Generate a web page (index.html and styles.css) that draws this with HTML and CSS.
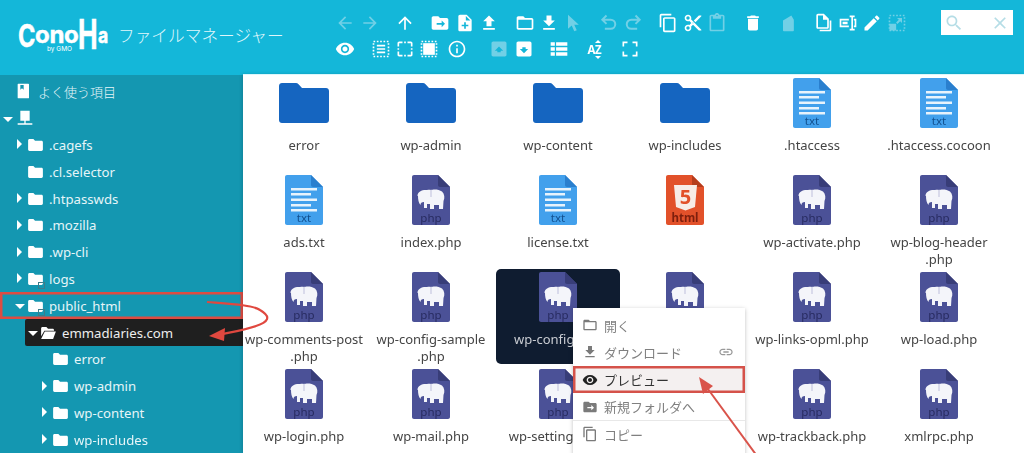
FILE: index.html
```html
<!DOCTYPE html>
<html lang="ja">

<head>
    <meta charset="UTF-8" />
    <meta name="viewport" content="width=device-width, initial-scale=1.0" />
    <title>ConoHa ファイルマネージャー</title>
    <link rel="stylesheet" href="styles.css">
</head>

<body>
    <!-- shared icons -->
    <svg class="defs" xmlns="http://www.w3.org/2000/svg">
        <symbol id="i-back" viewBox="0 0 24 24"><path d="M20 11H7.83l5.59-5.59L12 4l-8 8 8 8 1.41-1.41L7.83 13H20v-2z" /></symbol>
        <symbol id="i-forward" viewBox="0 0 24 24"><path d="M12 4l-1.41 1.41L16.17 11H4v2h12.17l-5.58 5.59L12 20l8-8z" /></symbol>
        <symbol id="i-up" viewBox="0 0 24 24"><path d="M4 12l1.41 1.41L11 7.83V20h2V7.83l5.58 5.59L20 12l-8-8-8 8z" /></symbol>
        <symbol id="i-folder-new" viewBox="0 0 24 24"><path d="M10 4H4c-1.1 0-2 .9-2 2v12c0 1.1.9 2 2 2h16c1.1 0 2-.9 2-2V8c0-1.1-.9-2-2-2h-8l-2-2zm4 5l4 4-4 4v-3H8v-2h6V9z" fill-rule="evenodd" /></symbol>
        <symbol id="i-file-add" viewBox="0 0 24 24"><path d="M14 2H6c-1.1 0-1.99.9-1.99 2L4 20c0 1.1.89 2 1.99 2H18c1.1 0 2-.9 2-2V8l-6-6zm2 14h-3v3h-2v-3H8v-2h3v-3h2v3h3v2zm-3-7V3.5L18.5 9H13z" /></symbol>
        <symbol id="i-upload" viewBox="0 0 24 24"><path d="M9 16h6v-6h4l-7-7-7 7h4zm-4 2h14v2H5z" /></symbol>
        <symbol id="i-folder-line" viewBox="0 0 24 24"><path d="M20 6h-8l-2-2H4c-1.1 0-1.99.9-1.99 2L2 18c0 1.1.9 2 2 2h16c1.1 0 2-.9 2-2V8c0-1.1-.9-2-2-2zm0 12H4V8h16v10z" /></symbol>
        <symbol id="i-download" viewBox="0 0 24 24"><path d="M19 9h-4V3H9v6H5l7 7 7-7zM5 18v2h14v-2H5z" /></symbol>
        <symbol id="i-cursor" viewBox="0 0 24 24"><path d="M6 2v17l4.5-4 3 7 3-1.3-3-6.7H19z" /></symbol>
        <symbol id="i-undo" viewBox="0 0 24 24"><path d="M9 3L4 8l5 5M4 8h10a5.5 5.5 0 0 1 0 11H7" fill="none" stroke="currentColor" stroke-width="2.4" /></symbol>
        <symbol id="i-redo" viewBox="0 0 24 24"><path d="M15 3l5 5-5 5M20 8H10a5.5 5.5 0 0 0 0 11h7" fill="none" stroke="currentColor" stroke-width="2.4" /></symbol>
        <symbol id="i-copy" viewBox="0 0 24 24"><path d="M16 1H4c-1.1 0-2 .9-2 2v14h2V3h12V1zm3 4H8c-1.1 0-2 .9-2 2v14c0 1.1.9 2 2 2h11c1.1 0 2-.9 2-2V7c0-1.1-.9-2-2-2zm0 16H8V7h11v14z" /></symbol>
        <symbol id="i-cut" viewBox="0 0 24 24"><path d="M9.64 7.64c.23-.5.36-1.05.36-1.64 0-2.21-1.79-4-4-4S2 3.79 2 6s1.79 4 4 4c.59 0 1.14-.13 1.64-.36L10 12l-2.36 2.36C7.14 14.13 6.59 14 6 14c-2.21 0-4 1.79-4 4s1.79 4 4 4 4-1.79 4-4c0-.59-.13-1.14-.36-1.64L12 14l7 7h3v-1L9.64 7.64zM6 8c-1.1 0-2-.89-2-2s.9-2 2-2 2 .89 2 2-.9 2-2 2zm0 12c-1.1 0-2-.89-2-2s.9-2 2-2 2 .89 2 2-.9 2-2 2zm6-7.5c-.28 0-.5-.22-.5-.5s.22-.5.5-.5.5.22.5.5-.22.5-.5.5zM19 3l-6 6 2 2 7-7V3z" /></symbol>
        <symbol id="i-paste" viewBox="0 0 24 24"><path d="M19 2h-4.18C14.4.84 13.3 0 12 0c-1.3 0-2.4.84-2.82 2H5c-1.1 0-2 .9-2 2v16c0 1.1.9 2 2 2h14c1.1 0 2-.9 2-2V4c0-1.1-.9-2-2-2zm-7 0c.55 0 1 .45 1 1s-.45 1-1 1-1-.45-1-1 .45-1 1-1zm7 18H5V4h2v3h10V4h2v16z" /></symbol>
        <symbol id="i-trash" viewBox="0 0 24 24"><path d="M6 19c0 1.1.9 2 2 2h8c1.1 0 2-.9 2-2V7H6v12zM19 4h-3.5l-1-1h-5l-1 1H5v2h14V4z" /></symbol>
        <symbol id="i-empty" viewBox="0 0 24 24"><path d="M6 9l10-6 3 5v13c0 .6-.4 1-1 1H7c-.6 0-1-.4-1-1z" /></symbol>
        <symbol id="i-duplicate" viewBox="0 0 24 24"><path d="M13 1H6c-1.1 0-2 .9-2 2v14c0 1.1.9 2 2 2h11c1.1 0 2-.9 2-2V7l-6-6zm4 16H6V3h6v5h5v9zM20 9v11H8v2h12c1.1 0 2-.9 2-2V9h-2z" /></symbol>
        <symbol id="i-rename" viewBox="0 0 24 24"><path d="M2 7h11v2H4v6h9v2H2zM5.500 10.500h6v3h-6zM14 3h6v2h-2v14h2v2h-6v-2h2V5h-2zM19 7h3v10h-3v-2h1V9h-1z" /></symbol>
        <symbol id="i-edit" viewBox="0 0 24 24"><path d="M3 17.25V21h3.75L17.81 9.94l-3.75-3.75L3 17.25zM20.71 7.04c.39-.39.39-1.02 0-1.41l-2.34-2.34c-.39-.39-1.02-.39-1.41 0l-1.83 1.83 3.750 3.75 1.83-1.83z" /></symbol>
        <symbol id="i-resize" viewBox="0 0 24 24"><rect x="3" y="3" width="18" height="18" fill="none" stroke="currentColor" stroke-width="2" stroke-dasharray="2 2" /><path d="M3 13h8v8H3zM12 6h6v6l-2.200-2.200-3.300 3.300-1.600-1.600 3.300-3.300z" /></symbol>
        <symbol id="i-eye" viewBox="0 0 24 24"><path d="M12 4.500C7 4.500 2.730 7.610 1 12c1.730 4.390 6 7.500 11 7.500s9.270-3.110 11-7.500c-1.730-4.390-6-7.500-11-7.500zM12 17c-2.760 0-5-2.240-5-5s2.240-5 5-5 5 2.240 5 5-2.240 5-5 5zm0-8c-1.660 0-3 1.340-3 3s1.340 3 3 3 3-1.340 3-3-1.340-3-3-3z" /></symbol>
        <symbol id="i-select-all" viewBox="0 0 24 24"><rect x="3" y="3" width="18" height="18" fill="none" stroke="currentColor" stroke-width="2" stroke-dasharray="2 2" /><path d="M7 7h10v2H7zM7 11h10v2H7zM7 15h10v2H7z" /></symbol>
        <symbol id="i-select-none" viewBox="0 0 24 24"><path d="M3 9V5c0-1.100.9-2 2-2h4v2H5v4zM15 3h4c1.100 0 2 .9 2 2v4h-2V5h-4zM3 15h2v4h4v2H5c-1.100 0-2-.9-2-2zM19 15h2v4c0 1.100-.9 2-2 2h-4v-2h4zM11 3h2v2h-2zM11 19h2v2h-2zM3 11h2v2H3zM19 11h2v2h-2z" /></symbol>
        <symbol id="i-select-inv" viewBox="0 0 24 24"><path d="M5 5h14v14H5z" /><rect x="3" y="3" width="18" height="18" fill="none" stroke="currentColor" stroke-width="2" stroke-dasharray="2 2" /></symbol>
        <symbol id="i-info" viewBox="0 0 24 24"><path d="M11 7h2v2h-2zm0 4h2v6h-2zm1-9C6.480 2 2 6.480 2 12s4.480 10 10 10 10-4.480 10-10S17.520 2 12 2zm0 18c-4.410 0-8-3.590-8-8s3.590-8 8-8 8 3.590 8 8-3.590 8-8 8z" /></symbol>
        <symbol id="i-box-up" viewBox="0 0 24 24"><path d="M5 3h14c1.100 0 2 .9 2 2v14c0 1.100-.9 2-2 2H5c-1.100 0-2-.9-2-2V5c0-1.100.9-2 2-2zm7 6l-5 5h3v2h4v-2h3z" fill-rule="evenodd" /></symbol>
        <symbol id="i-box-down" viewBox="0 0 24 24"><path d="M5 3h14c1.100 0 2 .9 2 2v14c0 1.100-.9 2-2 2H5c-1.100 0-2-.9-2-2V5c0-1.100.9-2 2-2zm7 14l5-5h-3v-2h-4v2H7z" fill-rule="evenodd" /></symbol>
        <symbol id="i-list" viewBox="0 0 24 24"><path d="M2 4h5v4H2zM8.500 4H22v4H8.500zM2 10h5v4H2zM8.500 10H22v4H8.500zM2 16h5v4H2zM8.500 16H22v4H8.500z" /></symbol>
        <symbol id="i-full" viewBox="0 0 24 24"><path d="M3 9V3h6v2H5v4zM15 3h6v6h-2V5h-4zM3 15h2v4h4v2H3zM19 15h2v6h-6v-2h4z" /></symbol>
        <symbol id="i-search" viewBox="0 0 24 24"><path d="M15.500 14h-.79l-.28-.27C15.410 12.590 16 11.110 16 9.500 16 5.910 13.090 3 9.500 3S3 5.910 3 9.500 5.910 16 9.500 16c1.610 0 3.090-.59 4.230-1.570l.27.28v.79l5 4.990L20.490 19l-4.990-5zm-6 0C7.010 14 5 11.990 5 9.500S7.010 5 9.500 5 14 7.010 14 9.500 11.990 14 9.500 14z" /></symbol>
        <symbol id="i-close" viewBox="0 0 24 24"><path d="M19 6.410L17.590 5 12 10.590 6.410 5 5 6.410 10.590 12 5 17.590 6.410 19 12 13.410 17.590 19 19 17.590 13.410 12z" /></symbol>
        <symbol id="i-link" viewBox="0 0 24 24"><path d="M3.900 12c0-1.710 1.390-3.100 3.100-3.100h4V7H7c-2.760 0-5 2.240-5 5s2.240 5 5 5h4v-1.900H7c-1.710 0-3.100-1.390-3.100-3.100zM8 13h8v-2H8v2zm9-6h-4v1.900h4c1.710 0 3.100 1.390 3.100 3.100s-1.390 3.100-3.100 3.100h-4V17h4c2.760 0 5-2.240 5-5s-2.240-5-5-5z" /></symbol>
        <symbol id="i-book" viewBox="0 0 24 24"><path d="M5 1h15c.6 0 1 .4 1 1v20c0 .6-.4 1-1 1H5c-.6 0-1-.4-1-1V2c0-.6.4-1 1-1zm3 2v7l2.500-2 2.500 2V3z" fill-rule="evenodd" /></symbol>
        <symbol id="i-host" viewBox="0 0 24 24"><path d="M5 1h14v15H5zM11 16h2v4h-2zM1 20h22v2H1z" /></symbol>
        <symbol id="i-tree-folder" viewBox="0 0 16 13"><path d="M1.500 0h4.200L7.500 2h7c.8 0 1.500.7 1.500 1.500v8c0 .8-.7 1.500-1.500 1.500h-13C.7 13 0 12.300 0 11.500v-10C0 .7.700 0 1.500 0z" /></symbol>
        <symbol id="i-tree-open" viewBox="0 0 16 13"><path d="M1.500 0h4.200L7.500 2h5c.8 0 1.500.7 1.500 1.500V4H3.500L0 10V1.500C0 .7.700 0 1.500 0zM4 5h12l-3 8H0z" /></symbol>

        <symbol id="f-folder" viewBox="0 0 50 40"><path d="M3 0h14c1 0 1.700.4 2.300 1L23 5h24c1.700 0 3 1.300 3 3v29c0 1.700-1.300 3-3 3H3c-1.700 0-3-1.300-3-3V3c0-1.700 1.300-3 3-3z" fill="#1565c0" /></symbol>
        <symbol id="f-txt" viewBox="0 0 38 50">
            <path d="M2 0h24l12 12v36c0 1.100-.9 2-2 2H2c-1.100 0-2-.9-2-2V2C0 .9.900 0 2 0z" fill="#42a0ec" />
            <path d="M26 0l12 12H28c-1.100 0-2-.9-2-2z" fill="#2a7fce" />
            <path d="M6 13h26v2.500H6zM6 18h20v2.500H6zM6 23.500h26V26H6zM6 29h20v2.500H6zM6 34h26v2.500H6z" fill="#e8f3fc" />
            <text class="ftext" x="19" y="47" fill="#12508f">txt</text>
        </symbol>
        <symbol id="f-php" viewBox="0 0 38 50">
            <path d="M2 0h24l12 12v36c0 1.100-.9 2-2 2H2c-1.100 0-2-.9-2-2V2C0 .9.900 0 2 0z" fill="#4b5197" />
            <path d="M26 0l12 12H28c-1.100 0-2-.9-2-2z" fill="#383d78" />
            <path d="M5.500 21C5.500 16 11 14.500 15 15c1.700-.5 3-.5 4 0 2-1 8-1 11 1.500 2.500 2.500 3 6.500 1.500 9.500l-.5 8h-4v-4h-5v4h-4v-5h-3v4h-3v-6c-2.500 0-3.500 1-3.500 3-2-2-2.500-6-2.500-9z" fill="#f4f5fa" />
            <path d="M19 15v7" stroke="#a7aacf" stroke-width=".7" />
            <text class="ftext" x="19" y="47" fill="#272b60">php</text>
        </symbol>
        <symbol id="f-html" viewBox="0 0 38 50">
            <path d="M2 0h24l12 12v36c0 1.100-.9 2-2 2H2c-1.100 0-2-.9-2-2V2C0 .9.900 0 2 0z" fill="#e2512a" />
            <path d="M26 0l12 12H28c-1.100 0-2-.9-2-2z" fill="#b53d1d" />
            <path d="M8 10h23l-2 22-9.500 3.500L10 32z" fill="#f7ece7" />
            <text class="ffive" x="19.500" y="29" fill="#e2512a">5</text>
            <text class="ftext fbold" x="19" y="47" fill="#7d1f0d">html</text>
        </symbol>
    </svg>

    <div class="app">
        <header class="topbar">
            <div class="brand">
                <div class="logo">
                    <span class="logo-c">C</span><span class="logo-mid">ono</span><span class="logo-h">H</span><span class="logo-a">a</span>
                    <span class="logo-by">by GMO</span>
                </div>
                <div class="app-title">ファイルマネージャー</div>
            </div>

            <div class="toolbar">
                <div class="tb-row">
                    <div class="tb-group">
                        <span class="tb off"><svg><use href="#i-back" /></svg></span>
                        <span class="tb off"><svg><use href="#i-forward" /></svg></span>
                    </div>
                    <div class="tb-group">
                        <span class="tb"><svg><use href="#i-up" /></svg></span>
                    </div>
                    <div class="tb-group">
                        <span class="tb"><svg><use href="#i-folder-new" /></svg></span>
                        <span class="tb"><svg><use href="#i-file-add" /></svg></span>
                        <span class="tb"><svg><use href="#i-upload" /></svg></span>
                    </div>
                    <div class="tb-group">
                        <span class="tb"><svg><use href="#i-folder-line" /></svg></span>
                        <span class="tb"><svg><use href="#i-download" /></svg></span>
                        <span class="tb off"><svg><use href="#i-cursor" /></svg></span>
                    </div>
                    <div class="tb-group">
                        <span class="tb off"><svg><use href="#i-undo" /></svg></span>
                        <span class="tb off"><svg><use href="#i-redo" /></svg></span>
                    </div>
                    <div class="tb-group">
                        <span class="tb"><svg><use href="#i-copy" /></svg></span>
                        <span class="tb"><svg><use href="#i-cut" /></svg></span>
                        <span class="tb off"><svg><use href="#i-paste" /></svg></span>
                    </div>
                    <div class="tb-group">
                        <span class="tb"><svg><use href="#i-trash" /></svg></span>
                    </div>
                    <div class="tb-group">
                        <span class="tb off"><svg><use href="#i-empty" /></svg></span>
                    </div>
                    <div class="tb-group">
                        <span class="tb"><svg><use href="#i-duplicate" /></svg></span>
                        <span class="tb"><svg><use href="#i-rename" /></svg></span>
                        <span class="tb"><svg><use href="#i-edit" /></svg></span>
                        <span class="tb off"><svg><use href="#i-resize" /></svg></span>
                    </div>
                </div>
                <div class="tb-row">
                    <div class="tb-group">
                        <span class="tb"><svg><use href="#i-eye" /></svg></span>
                    </div>
                    <div class="tb-group tb-tight">
                        <span class="tb"><svg><use href="#i-select-all" /></svg></span>
                        <span class="tb"><svg><use href="#i-select-none" /></svg></span>
                        <span class="tb"><svg><use href="#i-select-inv" /></svg></span>
                    </div>
                    <div class="tb-group tb-wide">
                        <span class="tb"><svg><use href="#i-info" /></svg></span>
                    </div>
                    <div class="tb-group">
                        <span class="tb off"><svg><use href="#i-box-up" /></svg></span>
                        <span class="tb"><svg><use href="#i-box-down" /></svg></span>
                    </div>
                    <div class="tb-group">
                        <span class="tb"><svg><use href="#i-list" /></svg></span>
                    </div>
                    <div class="tb-group">
                        <span class="tb tb-sort">AZ</span>
                    </div>
                    <div class="tb-group">
                        <span class="tb"><svg><use href="#i-full" /></svg></span>
                    </div>
                </div>
            </div>

            <div class="search">
                <svg><use href="#i-search" /></svg>
                <svg><use href="#i-close" /></svg>
            </div>
        </header>

        <div class="body">
            <nav class="tree">
                <div class="row l-fav"><svg class="ico-book"><use href="#i-book" /></svg><span class="fav-text">よく使う項目</span></div>
                <div class="row l0"><span class="arrow down"></span><svg class="ico-host"><use href="#i-host" /></svg></div>
                <div class="row l1"><span class="arrow right"></span><svg class="ico"><use href="#i-tree-folder" /></svg>.cagefs</div>
                <div class="row l1"><span class="arrow"></span><svg class="ico"><use href="#i-tree-folder" /></svg>.cl.selector</div>
                <div class="row l1"><span class="arrow right"></span><svg class="ico"><use href="#i-tree-folder" /></svg>.htpasswds</div>
                <div class="row l1"><span class="arrow right"></span><svg class="ico"><use href="#i-tree-folder" /></svg>.mozilla</div>
                <div class="row l1"><span class="arrow right"></span><svg class="ico"><use href="#i-tree-folder" /></svg>.wp-cli</div>
                <div class="row l1"><span class="arrow right"></span><svg class="ico"><use href="#i-tree-folder" /></svg><span class="sym"></span>logs</div>
                <div class="row l1 marked"><span class="arrow down"></span><svg class="ico"><use href="#i-tree-folder" /></svg><span class="sym"></span>public_html</div>
                <div class="row l2 current"><span class="arrow down"></span><svg class="ico"><use href="#i-tree-open" /></svg>emmadiaries.com</div>
                <div class="row l3"><span class="arrow"></span><svg class="ico"><use href="#i-tree-folder" /></svg>error</div>
                <div class="row l3"><span class="arrow right"></span><svg class="ico"><use href="#i-tree-folder" /></svg>wp-admin</div>
                <div class="row l3"><span class="arrow right"></span><svg class="ico"><use href="#i-tree-folder" /></svg>wp-content</div>
                <div class="row l3"><span class="arrow right"></span><svg class="ico"><use href="#i-tree-folder" /></svg>wp-includes</div>
            </nav>

            <main class="files">
                <div class="file"><div class="thumb"><svg class="fi-folder"><use href="#f-folder" /></svg></div><div class="name">error</div></div>
                <div class="file"><div class="thumb"><svg class="fi-folder"><use href="#f-folder" /></svg></div><div class="name">wp-admin</div></div>
                <div class="file"><div class="thumb"><svg class="fi-folder"><use href="#f-folder" /></svg></div><div class="name">wp-content</div></div>
                <div class="file"><div class="thumb"><svg class="fi-folder"><use href="#f-folder" /></svg></div><div class="name">wp-includes</div></div>
                <div class="file"><div class="thumb"><svg class="fi-doc"><use href="#f-txt" /></svg></div><div class="name">.htaccess</div></div>
                <div class="file"><div class="thumb"><svg class="fi-doc"><use href="#f-txt" /></svg></div><div class="name">.htaccess.cocoon</div></div>

                <div class="file"><div class="thumb"><svg class="fi-doc"><use href="#f-txt" /></svg></div><div class="name">ads.txt</div></div>
                <div class="file"><div class="thumb"><svg class="fi-doc"><use href="#f-php" /></svg></div><div class="name">index.php</div></div>
                <div class="file"><div class="thumb"><svg class="fi-doc"><use href="#f-txt" /></svg></div><div class="name">license.txt</div></div>
                <div class="file"><div class="thumb"><svg class="fi-doc"><use href="#f-html" /></svg></div></div>
                <div class="file"><div class="thumb"><svg class="fi-doc"><use href="#f-php" /></svg></div><div class="name">wp-activate.php</div></div>
                <div class="file"><div class="thumb"><svg class="fi-doc"><use href="#f-php" /></svg></div><div class="name">wp-blog-header<br>.php</div></div>

                <div class="file"><div class="thumb"><svg class="fi-doc"><use href="#f-php" /></svg></div><div class="name">wp-comments-post<br>.php</div></div>
                <div class="file"><div class="thumb"><svg class="fi-doc"><use href="#f-php" /></svg></div><div class="name">wp-config-sample<br>.php</div></div>
                <div class="file selected"><div class="thumb"><svg class="fi-doc"><use href="#f-php" /></svg></div><div class="name">wp-config.php</div></div>
                <div class="file"><div class="thumb"><svg class="fi-doc"><use href="#f-php" /></svg></div></div>
                <div class="file"><div class="thumb"><svg class="fi-doc"><use href="#f-php" /></svg></div><div class="name">wp-links-opml.php</div></div>
                <div class="file"><div class="thumb"><svg class="fi-doc"><use href="#f-php" /></svg></div><div class="name">wp-load.php</div></div>

                <div class="file"><div class="thumb"><svg class="fi-doc"><use href="#f-php" /></svg></div><div class="name">wp-login.php</div></div>
                <div class="file"><div class="thumb"><svg class="fi-doc"><use href="#f-php" /></svg></div><div class="name">wp-mail.php</div></div>
                <div class="file"><div class="thumb"><svg class="fi-doc"><use href="#f-php" /></svg></div><div class="name">wp-settings.php</div></div>
                <div class="file"><div class="thumb"><svg class="fi-doc"><use href="#f-php" /></svg></div></div>
                <div class="file"><div class="thumb"><svg class="fi-doc"><use href="#f-php" /></svg></div><div class="name">wp-trackback.php</div></div>
                <div class="file"><div class="thumb"><svg class="fi-doc"><use href="#f-php" /></svg></div><div class="name">xmlrpc.php</div></div>
            </main>
        </div>

        <!-- context menu -->
        <ul class="menu">
            <li class="menu-item"><svg><use href="#i-folder-line" /></svg>開く</li>
            <li class="menu-item"><svg><use href="#i-download" /></svg>ダウンロード<svg class="menu-link"><use href="#i-link" /></svg></li>
            <li class="menu-item preview"><svg><use href="#i-eye" /></svg>プレビュー</li>
            <li class="menu-item"><svg><use href="#i-folder-new" /></svg>新規フォルダへ</li>
            <li class="menu-item"><svg><use href="#i-copy" /></svg>コピー</li>
        </ul>

        <!-- red annotation arrows -->
        <svg class="notes" viewBox="0 0 1024 453">
            <path d="M207 302C232 304 252 305 260 310C272 317 268 322 256 326C245 330 232 332 222 334" fill="none" stroke="#e0483f" stroke-width="2.200" />
            <path d="M209 336L225 328L224 341Z" fill="#e0483f" />
            <path d="M757 456L705 385" fill="none" stroke="#d9534a" stroke-width="2" />
            <path d="M699 377L713 386L703 394Z" fill="#d9534a" />
        </svg>
    </div>
</body>

</html>
```

FILE: styles.css
```css
* {
    box-sizing: border-box;
}

html,
body {
    margin: 0;
    height: 100%;
    overflow: hidden;
}

body {
    font-family: "Noto Sans", "Noto Sans CJK JP", sans-serif;
    font-size: 13px;
    background-color: #fff;
}

.defs {
    display: none;
}

.app {
    position: relative;
    width: 1024px;
    height: 453px;
    overflow: hidden;
    filter: blur(0.4px);
}

/* top bar */
.topbar {
    display: flex;
    height: 75px;
    background-color: #14b7d9;
    color: #fff;
}

.brand {
    display: flex;
    align-items: center;
    width: 333px;
    height: 70px;
    padding-left: 18px;
}

.logo {
    position: relative;
    display: flex;
    align-items: baseline;
    width: 100px;
    font-family: "Inter", sans-serif;
    font-weight: 700;
    line-height: 24px;
    -webkit-text-stroke: 0.5px #fff;
}

.logo-c {
    width: 17px;
    font-size: 31px;
    transform-origin: left;
    transform: scaleX(0.76);
}

.logo-mid {
    font-size: 24px;
    letter-spacing: -0.3px;
    transform: translateY(-4px);
}

.logo-h {
    width: 20px;
    font-size: 41px;
    transform-origin: left;
    transform: translateY(2px) scaleX(0.64);
}

.logo-a {
    font-size: 22px;
    transform-origin: left;
    transform: translateY(-4px) scaleX(0.8);
}

.logo-by {
    position: absolute;
    left: 29px;
    top: 25px;
    font-size: 6.500px;
    line-height: 8px;
    font-weight: 400;
    -webkit-text-stroke: 0;
    white-space: nowrap;
}

.app-title {
    font-family: "Noto Sans CJK JP", sans-serif;
    font-size: 16.700px;
    font-weight: 300;
    color: #dff6fb;
    white-space: nowrap;
}

.toolbar {
    padding-top: 10px;
}

.tb-row {
    display: flex;
    height: 26px;
}

.tb-group {
    display: flex;
    margin-right: 11px;
}

.tb-tight {
    margin-right: 3px;
}

.tb-wide {
    margin-right: 18px;
}

.tb {
    display: flex;
    align-items: center;
    justify-content: center;
    width: 24.400px;
    height: 26px;
    color: #fff;
}

.tb svg {
    width: 20px;
    height: 20px;
    fill: currentColor;
}

.tb.off {
    color: #71d0e6;
}

.tb-sort {
    position: relative;
    font-size: 11.500px;
    font-weight: 700;
    letter-spacing: -0.5px;
}

/* small carets above and below the Z */
.tb-sort::before,
.tb-sort::after {
    content: "";
    position: absolute;
    left: 13px;
    border-left: 3px solid transparent;
    border-right: 3px solid transparent;
}

.tb-sort::before {
    top: 4px;
    border-bottom: 3px solid #fff;
}

.tb-sort::after {
    bottom: 3px;
    border-top: 3px solid #fff;
}

.search {
    position: absolute;
    top: 10px;
    right: 11px;
    display: flex;
    align-items: center;
    justify-content: space-between;
    width: 72px;
    height: 25px;
    padding: 0 3px;
    background-color: #fff;
}

.search svg {
    width: 20px;
    height: 20px;
    fill: #b5dde6;
}

/* left tree + file grid */
.body {
    display: flex;
    height: 378px;
}

.tree {
    width: 243px;
    flex-shrink: 0;
    padding-top: 3px;
    background-color: #1497b1;
    color: #e6f5f8;
    font-size: 13.200px;
}

.row {
    display: flex;
    align-items: center;
    height: 26.800px;
    white-space: nowrap;
}

.l0 {
    padding-left: 3px;
}

.l1 {
    padding-left: 15px;
}

.l2 {
    padding-left: 28px;
}

.l3 {
    padding-left: 40px;
}

.l-fav {
    padding-left: 15px;
}

.ico-book {
    width: 16px;
    height: 16px;
    fill: #fff;
    margin-right: 7px;
}

.fav-text {
    font-family: "Noto Sans CJK JP", sans-serif;
    font-size: 13px;
    font-weight: 300;
}

.ico-host {
    width: 16px;
    height: 16px;
    fill: #fff;
    margin-left: 1px;
}

.arrow {
    width: 10px;
    height: 10px;
    flex-shrink: 0;
    margin-right: 3px;
}

.arrow.right {
    margin-top: -1px;
    border-left: 5px solid #fff;
    border-top: 5px solid transparent;
    border-bottom: 5px solid transparent;
    margin-left: 2px;
    margin-right: 1px;
}

.arrow.down {
    margin-top: 2px;
    height: 5px;
    width: 10px;
    border-top: 5px solid #fff;
    border-left: 5px solid transparent;
    border-right: 5px solid transparent;
}

.ico {
    width: 15px;
    height: 12px;
    fill: #fff;
    margin-right: 6px;
    flex-shrink: 0;
}

/* small symlink mark under the folder */
.sym {
    width: 7px;
    height: 7px;
    margin: 14px 4px 0 -11px;
    border: 1px solid #3d7c8a;
    flex-shrink: 0;
}

.marked {
    box-shadow: inset 0 0 0 2.500px #dd4c42;
}

.current {
    margin-left: 25px;
    padding-left: 3px;
    background-color: #1f1f1f;
    border-radius: 2px 0 0 2px;
    color: #eee;
}

.files {
    flex: 1;
    display: grid;
    grid-template-columns: repeat(6, 122px);
    grid-auto-rows: 97px;
    column-gap: 5px;
    align-content: start;
    overflow: hidden;
    background-color: #fff;
    box-shadow: -1px 0 3px rgba(0, 0, 0, 0.15);
    border-top: 1px solid #dcf7fb;
    margin-top: -1px;
    color: #454545;
}

.file {
    display: flex;
    flex-direction: column;
    align-items: center;
    padding-top: 3px;
    text-align: center;
    white-space: nowrap;
}

.thumb {
    display: flex;
    align-items: center;
    height: 50px;
}

.fi-folder {
    width: 50px;
    height: 40px;
}

.fi-doc {
    width: 38px;
    height: 50px;
}

.ftext {
    font-family: "Noto Sans", sans-serif;
    font-size: 11.500px;
    text-anchor: middle;
}

.fbold {
    font-weight: 700;
}

.ffive {
    font-family: "Noto Sans", sans-serif;
    font-size: 20px;
    font-weight: 700;
    text-anchor: middle;
}

.name {
    margin-top: 9px;
    line-height: 16.500px;
}

.selected {
    margin: 0 -1px;
    height: 95px;
    border-radius: 5px;
    background-color: #0f1c30;
    color: #c9ccd2;
}

/* context menu */
.menu {
    position: absolute;
    left: 573px;
    top: 308px;
    width: 172px;
    height: 160px;
    margin: 0;
    padding: 3.500px 0 0;
    list-style: none;
    background-color: #fff;
    box-shadow: 0 1px 4px rgba(0, 0, 0, 0.25);
    color: #808080;
    font-family: "Noto Sans CJK JP", sans-serif;
}

.menu-item {
    display: flex;
    align-items: center;
    height: 27.300px;
    padding-left: 9px;
    white-space: nowrap;
}

.menu-item svg {
    width: 16px;
    height: 16px;
    margin-right: 6px;
    fill: #7a7a7a;
    flex-shrink: 0;
}

.menu-item:nth-child(4) {
    border-bottom: 1px solid #e8e8e8;
}

.menu-item .menu-link {
    margin: 0 11px 0 auto;
    fill: #999;
}

.preview {
    box-shadow: inset 0 0 0 2.500px #d5524a;
    background-color: #f4f0f0;
    color: #333;
}

.preview svg {
    fill: #222;
}

.notes {
    position: absolute;
    left: 0;
    top: 0;
    width: 1024px;
    height: 453px;
    pointer-events: none;
}
```
